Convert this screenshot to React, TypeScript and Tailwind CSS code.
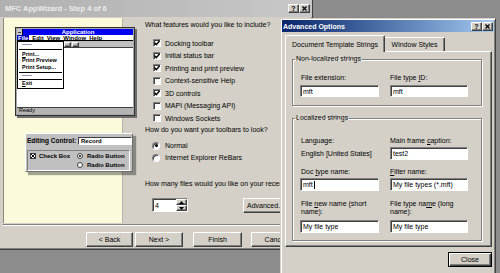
const raised =
  'border border-t-white border-l-white border-r-[#404040] border-b-[#404040] shadow-[inset_-1px_-1px_0_#808080]';
const sunken =
  'border border-t-[#808080] border-l-[#808080] border-r-white border-b-white shadow-[inset_1px_1px_0_#404040]';

function CheckBox({ checked }: { checked: boolean }) {
  return (
    <span className={`w-[8px] h-[8px] shrink-0 bg-white ${sunken} flex items-center justify-center`}>
      {checked && (
        <svg width="6" height="6" viewBox="0 0 6 6">
          <path d="M0.6 2.8 L2.3 4.6 L5.5 0.9" stroke="#000" strokeWidth="1.4" fill="none" />
        </svg>
      )}
    </span>
  );
}

function RadioDot({ on }: { on: boolean }) {
  return (
    <span className="w-[8px] h-[8px] shrink-0 rounded-full bg-white border border-t-[#808080] border-l-[#808080] border-r-white border-b-white shadow-[inset_1px_1px_0_#404040] flex items-center justify-center">
      {on && <span className="w-[3px] h-[3px] rounded-full bg-black" />}
    </span>
  );
}

function CaptionButtons() {
  return (
    <div className="flex">
      <div className={`w-[11px] h-[9px] bg-[#d4d0c8] ${raised} flex items-center justify-center text-[7px] font-bold`}>
        ?
      </div>
      <div className={`w-[11px] h-[9px] bg-[#d4d0c8] ${raised} flex items-center justify-center`}>
        <svg width="5" height="5" viewBox="0 0 5 5">
          <path d="M0.5 0.5 L4.5 4.5 M4.5 0.5 L0.5 4.5" stroke="#000" strokeWidth="1.3" />
        </svg>
      </div>
    </div>
  );
}

function AppMock() {
  return (
    <div className="mt-[9px] ml-[11px] w-[120px] h-[89px] shrink-0 border border-[#303030] bg-[#a8a8a8] p-[1px] shadow-[2px_2px_0_#6e6e6e] flex flex-col font-bold text-[6px]">
      <div className="h-[6px] bg-[#0000f0] flex">
        <div className="w-[6px] bg-[#c8c8c8] border-r border-black flex items-center justify-center">
          <div className="w-[3px] h-px bg-[#404040]" />
        </div>
        <div className="flex-1 flex items-center justify-center text-white">Application</div>
      </div>
      <div className="h-[6px] bg-white border-b border-black flex items-center gap-[3px] whitespace-nowrap">
        <span className="bg-[#0000c0] text-white px-[1px] h-full flex items-center">File</span>
        <span>Edit</span>
        <span>View</span>
        <span>Window</span>
        <span>Help</span>
      </div>
      <div className="relative flex-1 flex flex-col">
        <div className="h-[7px] bg-[#c0c0c0] border-b border-[#404040] flex items-center pl-[47px] gap-px">
          <div className={`w-[7px] h-[5px] bg-[#c0c0c0] ${raised}`} />
          <div className={`w-[7px] h-[5px] bg-[#c0c0c0] ${raised}`} />
        </div>
        <div className="flex-1 bg-white" />
        <div className="h-[7px] bg-[#b4b4b4] border-t border-[#404040] flex items-center pl-[2px] font-normal text-[5.5px]">
          Ready
        </div>
        <div className="absolute left-0 top-0 w-[47px] h-[48px] bg-white border border-black text-[5.5px] whitespace-nowrap">
          <div className="h-[6px] flex items-center pl-[4px] text-[#5a5a8a] tracking-[-0.5px]">-------</div>
          <div className="mt-[1px] mx-px h-px bg-black" />
          <div className="mt-[1px] h-[6.5px] flex items-center pl-[4px]">
            <span className="underline">P</span>rint...
          </div>
          <div className="h-[6.5px] flex items-center pl-[4px]">Print Preview</div>
          <div className="h-[6.5px] flex items-center pl-[4px]">Print Setup...</div>
          <div className="mt-[1px] mx-px h-px bg-black" />
          <div className="h-[6px] flex items-center pl-[4px] text-[#5a5a8a] tracking-[-0.5px]">-------</div>
          <div className="mx-px h-px bg-black" />
          <div className="mt-[1px] h-[6.5px] flex items-center pl-[4px]">
            <span className="underline">E</span>xit
          </div>
        </div>
      </div>
    </div>
  );
}

function EditPanel() {
  return (
    <div className="mt-[17px] ml-[21px] w-[108px] h-[39px] shrink-0 bg-[#c0c0c0] border border-t-white border-l-white border-r-[#707070] border-b-[#707070] shadow-[3px_3px_1px_rgba(0,0,0,0.35)] pl-px pt-[3px] font-bold text-[6.5px]">
      <div className="h-[8px] flex items-center justify-between whitespace-nowrap">
        <span>Editing Control:</span>
        <div className="w-[54px] h-[8px] bg-white border border-t-[#404040] border-l-[#404040] border-r-white border-b-white flex items-center pl-[2px] text-[6px]">
          Record
        </div>
      </div>
      <div className="mt-[5px] w-[103px] h-[21px] border border-t-[#808080] border-l-[#808080] border-r-white border-b-white pl-[2px] pt-[2px] flex text-[6px] whitespace-nowrap">
        <div className="w-[47px] flex items-start gap-[3px]">
          <span className="w-[6px] h-[6px] bg-white border border-[#404040] flex items-center justify-center">
            <svg width="4" height="4" viewBox="0 0 4 4">
              <path d="M0 0 L4 4 M4 0 L0 4" stroke="#000" strokeWidth="1" />
            </svg>
          </span>
          <span className="h-[6px] flex items-center">Check Box</span>
        </div>
        <div className="flex flex-col gap-[3px]">
          <div className="h-[6px] flex items-center gap-[4px]">
            <span className="w-[6px] h-[6px] rounded-full bg-white border border-[#404040] flex items-center justify-center">
              <span className="w-[2px] h-[2px] rounded-full bg-black" />
            </span>
            Radio Button
          </div>
          <div className="h-[6px] flex items-center gap-[4px]">
            <span className="w-[6px] h-[6px] rounded-full bg-white border border-[#404040]" />
            Radio Button
          </div>
        </div>
      </div>
    </div>
  );
}

function WinButton({ className, children }: { className: string; children: React.ReactNode }) {
  return (
    <div className={`h-[15px] bg-[#d4d0c8] ${raised} flex items-center justify-center whitespace-nowrap ${className}`}>
      {children}
    </div>
  );
}

function Wizard() {
  const features: [string, boolean][] = [
    ['Docking toolbar', true],
    ['Initial status bar', true],
    ['Printing and print preview', true],
    ['Context-sensitive Help', false],
    ['3D controls', true],
    ['MAPI (Messaging API)', false],
    ['Windows Sockets', false],
  ];
  return (
    <div className="absolute left-0 top-0 w-[313px] h-[250px] bg-[#d4d0c8] border-r border-b border-r-[#404040] border-b-[#404040] shadow-[inset_-1px_-1px_0_#808080] flex flex-col">
      <div className="h-[17px] shrink-0 bg-linear-to-r from-[#b0b0b0] to-[#c8c8c8] flex items-center justify-between pl-[5px] pr-[2px]">
        <span className="text-[7.5px] font-bold text-[#ececec]">MFC AppWizard - Step 4 of 6</span>
        <CaptionButtons />
      </div>
      <div className="flex h-[206px] shrink-0">
        <div className="mt-px ml-[3px] w-[120px] h-[205px] shrink-0 bg-[#fbfbdc] border-l border-r border-l-[#8a8a80] border-r-[#b4b4a8] flex flex-col">
          <AppMock />
          <EditPanel />
        </div>
        <div className="flex-1 min-w-0 pl-[22px] pt-px flex flex-col whitespace-nowrap">
          <div className="h-[12px] flex items-center">What features would you like to include?</div>
          <div className="mt-[7px] flex flex-col">
            {features.map(([label, on]) => (
              <div key={label} className="h-[12.5px] flex items-center gap-[4px] pl-[8px]">
                <CheckBox checked={on} />
                <span>{label}</span>
              </div>
            ))}
          </div>
          <div className="h-[10px] flex items-center">How do you want your toolbars to look?</div>
          <div className="mt-[5px] flex flex-col">
            <div className="h-[12px] flex items-center gap-[5px] pl-[7px]">
              <RadioDot on />
              <span>Normal</span>
            </div>
            <div className="h-[12px] flex items-center gap-[5px] pl-[7px]">
              <RadioDot on={false} />
              <span>Internet Explorer ReBars</span>
            </div>
          </div>
          <div className="mt-[14px] h-[12px] flex items-center">
            How many files would you like on your recent file list?
          </div>
          <div className="mt-[8px] h-[15px] flex items-center">
            <div className={`ml-[7px] w-[36px] h-[14px] bg-white ${sunken} flex`}>
              <span className="flex-1 flex items-center pl-[2px]">4</span>
              <div className="w-[11px] flex flex-col">
                <div className={`flex-1 bg-[#d4d0c8] ${raised} flex items-center justify-center`}>
                  <svg width="5" height="3" viewBox="0 0 5 3">
                    <path d="M2.5 0 L5 3 L0 3 Z" fill="#000" />
                  </svg>
                </div>
                <div className={`flex-1 bg-[#d4d0c8] ${raised} flex items-center justify-center`}>
                  <svg width="5" height="3" viewBox="0 0 5 3">
                    <path d="M0 0 L5 0 L2.5 3 Z" fill="#000" />
                  </svg>
                </div>
              </div>
            </div>
            <WinButton className="ml-[55px] w-[45px] shrink-0">Advanced...</WinButton>
          </div>
        </div>
      </div>
      <div className="mt-px mx-[3px] h-[2px] border-t border-t-[#808080] border-b border-b-white" />
      <div className="mt-[6px] flex">
        <WinButton className="ml-[86px] w-[47px]">&lt; Back</WinButton>
        <WinButton className="ml-[2px] w-[48px]">Next &gt;</WinButton>
        <WinButton className="ml-[10px] w-[49px]">Finish</WinButton>
        <WinButton className="ml-[9px] w-[49px]">Cancel</WinButton>
      </div>
    </div>
  );
}

function Field({ children, caret, h }: { children: React.ReactNode; caret?: boolean; h: string }) {
  return (
    <div className={`${h} bg-white ${sunken} flex items-center pl-[2px] whitespace-nowrap`}>
      <span>{children}</span>
      {caret && <span className="ml-px w-px h-[8px] bg-black" />}
    </div>
  );
}

function AdvancedOptions() {
  return (
    <div className="absolute left-[280px] top-[18px] w-[216px] h-[258px] bg-[#d4d0c8] border border-[#d4d0c8] border-r-[#404040] border-b-[#404040] shadow-[inset_1px_1px_0_#fff,inset_-1px_-1px_0_#808080] p-px flex flex-col">
      <div className="h-[12px] shrink-0 bg-linear-to-r from-[#0a246a] to-[#a6caf0] flex items-center justify-between pl-px pr-px">
        <span className="text-white font-bold text-[7px]">Advanced Options</span>
        <CaptionButtons />
      </div>
      <div className="mt-[3px] ml-[3px] mr-[2px] flex flex-col">
        <div className="h-[16px] flex items-end relative z-10">
          <div className="w-[100px] h-[17px] -mb-px bg-[#d4d0c8] border-t border-l border-r border-t-white border-l-white border-r-[#404040] rounded-t-[2px] shadow-[inset_-1px_0_0_#808080] flex items-center justify-center whitespace-nowrap">
            Document Template Strings
          </div>
          <div className="w-[60px] h-[14px] bg-[#d4d0c8] border-t border-r border-t-white border-r-[#404040] rounded-tr-[2px] shadow-[inset_-1px_0_0_#808080] flex items-center justify-center whitespace-nowrap">
            Window Styles
          </div>
        </div>
        <div className="h-[196px] bg-[#d4d0c8] border border-t-white border-l-white border-r-[#404040] border-b-[#404040] shadow-[inset_-1px_-1px_0_#808080] pl-[6px]">
          <fieldset className="mt-[3px] w-[190px] border border-[#808080] shadow-[inset_1px_1px_0_#fff,1px_1px_0_#fff]">
            <legend className="ml-[2px] px-px leading-[8px]">Non-localized strings</legend>
            <div className="pl-[7px] pb-[8px]">
              <div className="grid grid-cols-[79px_78px] gap-x-[11px]">
                <div className="mt-[9px] h-[10px] flex items-center pl-px">File extension:</div>
                <div className="mt-[9px] h-[10px] flex items-center">
                  File type&nbsp;<span className="underline">I</span>D:
                </div>
                <div className="mt-[3px]">
                  <Field h="h-[12px]">mft</Field>
                </div>
                <div className="mt-[3px]">
                  <Field h="h-[12px]">mft</Field>
                </div>
              </div>
            </div>
          </fieldset>
          <fieldset className="mt-[8px] w-[190px] border border-[#808080] shadow-[inset_1px_1px_0_#fff,1px_1px_0_#fff]">
            <legend className="ml-[2px] px-px leading-[8px]">Localized strings</legend>
            <div className="pl-[7px] pb-[7px] grid grid-cols-[79px_78px] gap-x-[11px]">
              <div className="mt-[13px] h-[10px] flex items-center pl-px">Language:</div>
              <div className="mt-[13px] h-[10px] flex items-center">
                Main frame&nbsp;<span className="underline">c</span>aption:
              </div>
              <div className="mt-[2px] h-[13px] flex items-center pl-px whitespace-nowrap">English [United States]</div>
              <div className="mt-[2px]">
                <Field h="h-[13px]">test2</Field>
              </div>
              <div className="mt-[6px] h-[10px] flex items-center pl-px">
                Doc&nbsp;<span className="underline">t</span>ype name:
              </div>
              <div className="mt-[6px] h-[10px] flex items-center">
                <span className="underline">F</span>ilter name:
              </div>
              <div className="mt-[2px]">
                <Field h="h-[13px]" caret>
                  mft
                </Field>
              </div>
              <div className="mt-[2px]">
                <Field h="h-[13px]">My file types (*.mft)</Field>
              </div>
              <div className="mt-[9px] h-[16px] leading-[8px] pl-px">
                File <span className="underline">n</span>ew name (short
                <br />
                name):
              </div>
              <div className="mt-[9px] h-[16px] leading-[8px]">
                File type na<span className="underline">m</span>e (long
                <br />
                name):
              </div>
              <div className="mt-[4px]">
                <Field h="h-[13px]">My file type</Field>
              </div>
              <div className="mt-[4px]">
                <Field h="h-[13px]">My file type</Field>
              </div>
            </div>
          </fieldset>
        </div>
        <div className="mt-[5px] flex justify-end">
          <div className="w-[44px] h-[15px] bg-[#d4d0c8] border border-black shadow-[inset_1px_1px_0_#fff,inset_-1px_-1px_0_#404040,inset_-2px_-2px_0_#808080] flex items-center justify-center">
            Close
          </div>
        </div>
      </div>
    </div>
  );
}

export default function App() {
  return (
    <div className="relative w-[500px] h-[273px] overflow-hidden bg-[#8c8c8c] font-['Liberation_Sans',Arial,sans-serif] text-[7px] leading-none text-black">
      <Wizard />
      <AdvancedOptions />
    </div>
  );
}
